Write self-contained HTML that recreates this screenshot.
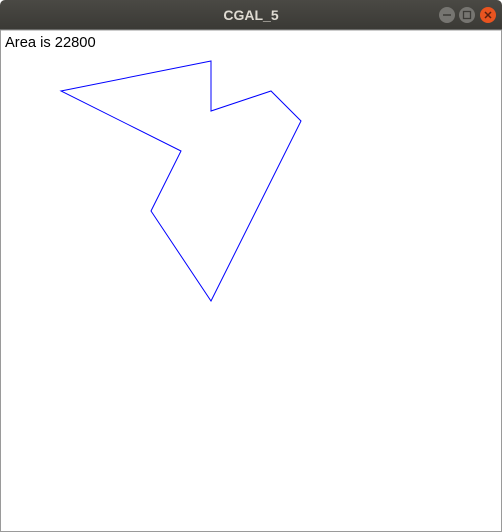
<html><body style="margin:0;width:502px;height:532px;overflow:hidden;background:#fff;font-family:'Liberation Sans',sans-serif">
<div style="position:absolute;left:0;top:0;width:502px;height:30px;background:linear-gradient(#4a4944,#3a3935);border-radius:5px 5px 0 0"></div>
<div style="position:absolute;left:0;top:7px;width:502px;text-align:center;color:#dfdbd2;font-weight:bold;font-size:14px">CGAL_5</div>
<svg style="position:absolute;left:0;top:0" width="502" height="532">
<circle cx="447" cy="15" r="8" fill="#767571"/><line x1="443" y1="15" x2="451" y2="15" stroke="#3c3b37" stroke-width="1.5"/>
<circle cx="467" cy="15" r="8" fill="#767571"/><rect x="463.5" y="11.5" width="7" height="7" fill="none" stroke="#3c3b37" stroke-width="1.3"/>
<circle cx="488" cy="15" r="8" fill="#e95420"/><path d="M485 12L491 18M491 12L485 18" stroke="#5a2010" stroke-width="1.5"/>
<rect x="0.5" y="30" width="501" height="501.5" fill="none" stroke="#9a9a9a"/>
<polygon points="61,91 211,61 211,111 271,91 301,121 211,301 151,211 181,151" fill="none" stroke="#0000ff" stroke-width="1"/>
</svg>
<div style="position:absolute;left:5px;top:35px;font-size:14.7px;color:#000">Area is 22800</div>
</body></html>
